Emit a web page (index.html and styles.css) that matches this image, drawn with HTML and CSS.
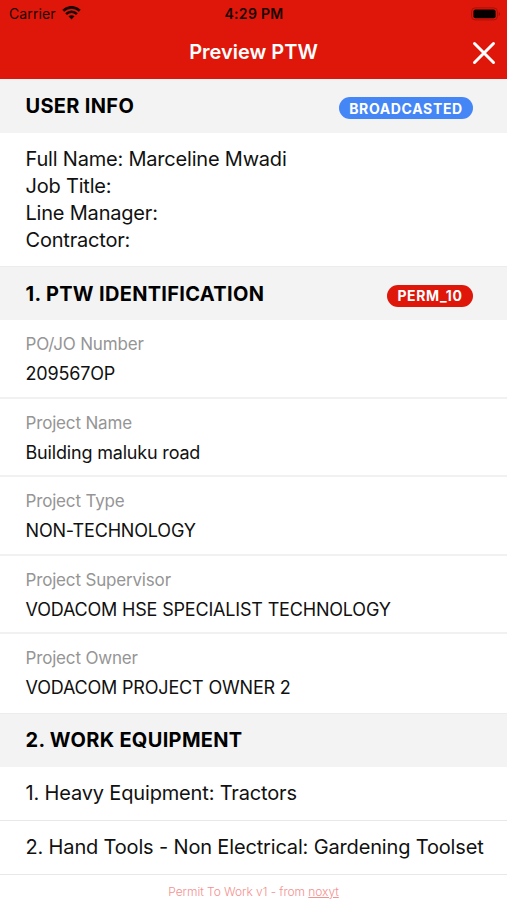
FILE: index.html
```html
<!DOCTYPE html>
<html lang="en"><head><meta charset="utf-8"><title>Preview PTW</title><link rel="stylesheet" href="styles.css"></head>
<body>
<header class="top">
<div class="status"><span class="carrier"><span>Carrier</span>
<svg class="wifi" width="19" height="14" viewBox="0 0 19 14" fill="none" stroke="#180402"><path d="M1.200 4.800C6 .1 13 .1 17.800 4.800" stroke-width="2.700"/><path d="M4.100 8.100c3-3 7.800-3 10.800 0" stroke-width="2.500"/><path d="M6.500 10.300l3 3.200 3-3.200c-1.700-1.500-4.300-1.500-6 0z" fill="#180402" stroke="none"/></svg></span>
<span class="clock">4:29 PM</span>
<svg class="battery" width="30" height="14" viewBox="0 0 30 14"><rect x=".6" y=".9" width="25.800" height="12" rx="3.500" fill="none" stroke="#a5120a"/><rect x="2.400" y="2.500" width="22.200" height="8.800" rx="2" fill="#080000"/><path d="M27.700 4.900v4q1.500-.6 1.500-2t-1.500-2z" fill="#a5120a"/></svg></div>
<div class="nav"><h1>Preview PTW</h1><svg class="close" width="24" height="24" viewBox="0 0 24 24" stroke="#fff" stroke-width="3" stroke-linecap="round"><path d="M2.500 2.500l19 19M21.500 2.500l-19 19"/></svg></div>
</header>
<main>
<section><h2 class="head"><span>USER INFO</span><span class="badge blue">BROADCASTED</span></h2>
<div class="info"><p>Full Name: Marceline Mwadi</p><p>Job Title:</p><p>Line Manager:</p><p>Contractor:</p></div></section>
<section><h2 class="head ruled"><span>1. PTW IDENTIFICATION</span><span class="badge red">PERM_10</span></h2>
<dl>
<div class="field"><dt>PO/JO Number</dt><dd>209567OP</dd></div>
<div class="field"><dt>Project Name</dt><dd>Building maluku road</dd></div>
<div class="field"><dt>Project Type</dt><dd>NON-TECHNOLOGY</dd></div>
<div class="field"><dt>Project Supervisor</dt><dd>VODACOM HSE SPECIALIST TECHNOLOGY</dd></div>
<div class="field"><dt>Project Owner</dt><dd>VODACOM PROJECT OWNER 2</dd></div>
</dl></section>
<section><h2 class="head ruled"><span>2. WORK EQUIPMENT</span></h2>
<p class="item">1. Heavy Equipment: Tractors</p><p class="item">2. Hand Tools - Non Electrical: Gardening Toolset</p></section>
</main>
<footer>Permit To Work v1 - from <a>noxyt</a></footer>
</body></html>
```
FILE: styles.css
```css
*{box-sizing:border-box}
body{margin:0;width:507px;height:900px;overflow:hidden;background:#fff;color:#111;font-family:Inter,"Liberation Sans",sans-serif}
h1,h2,p,dl,dd,dt{margin:0}
.top{height:79px;background:#df170a;display:flex;flex-direction:column}
.status{height:27px;display:grid;grid-template-columns:1fr auto 1fr;align-items:center;padding:0 6px 0 9px;font-size:14px;color:#180402}
.carrier{display:flex;align-items:center;gap:6px;letter-spacing:.12px}
.wifi{margin-top:-2px}
.clock{font-weight:600;letter-spacing:.3px;margin-right:2px}
.battery{justify-self:end}
.nav{height:52px;display:grid;grid-template-columns:1fr auto 1fr;align-items:center;padding:0 11px 2px}
.nav h1{grid-column:2;color:#fff;font-size:20px;font-weight:600}
.close{justify-self:end;margin-top:2px}
.head{height:54px;background:#f3f3f3;color:#000;display:flex;align-items:center;justify-content:space-between;padding:0 34px 0 25.500px;font-size:20px;font-weight:700;letter-spacing:.32px}
.ruled{box-shadow:inset 0 1px #ececec;padding-top:1px}
.badge{height:22px;margin-top:4px;border-radius:11px;color:#fff;display:flex;align-items:center;justify-content:center;font-size:14px;letter-spacing:.65px}
.blue{background:#4586f7;width:134px}
.red{background:#df170a;width:86px}
.info{height:133px;padding:13px 25.500px 0;font-size:20px;line-height:27px;letter-spacing:-.2px}
.field{height:78.600px;border-bottom:2px solid #f1f1f1;padding:10px 25.500px 0}
.field:last-child{border:0}
dt{font-size:17px;line-height:29px;color:#959595;letter-spacing:-.17px}
dd{font-size:18px;line-height:29px;letter-spacing:-.18px}
.item{height:54px;border-bottom:1px solid #e8e8e8;padding:0 25.500px;font-size:20px;line-height:53px;white-space:nowrap;letter-spacing:-.16px}
footer{height:26px;text-align:center;font-size:12px;font-weight:300;line-height:34px;letter-spacing:-.05px;color:#f4918f}
footer a{text-decoration:underline}
```
